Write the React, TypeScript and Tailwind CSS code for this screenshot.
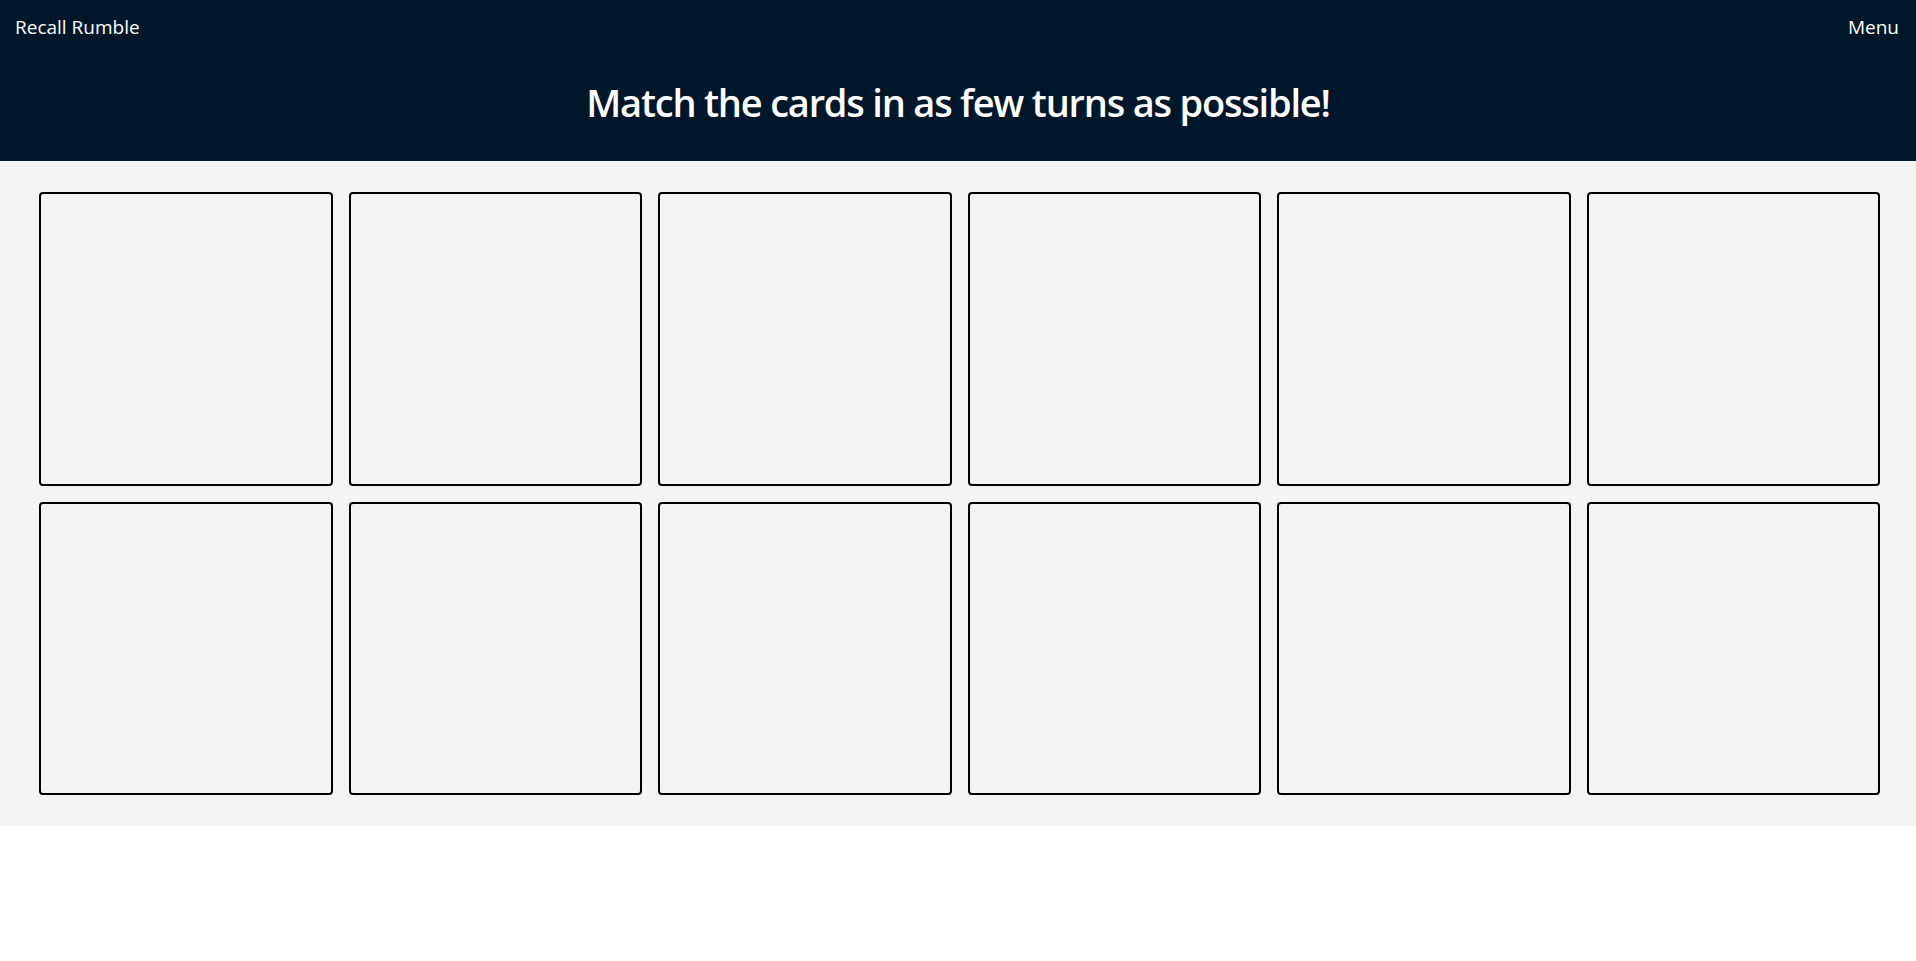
import React from "react";

export default function App() {
  const cards = Array.from({ length: 12 }, (_, i) => i);
  return (
    <div className="min-h-[961px] bg-white" style={{ fontFamily: '"Open Sans", "Noto Sans", sans-serif' }}>
      <header className="h-[161px] bg-[#00162a] text-white flex flex-col">
        <nav className="flex justify-between items-center pl-[15px] pr-[17px] h-[54px] text-[19px]">
          <span>Recall Rumble</span>
          <span>Menu</span>
        </nav>
        <h1 className="text-center text-[38px] font-semibold tracking-[-1.2px] mt-[22px] leading-[52px]">
          Match the cards in as few turns as possible!
        </h1>
      </header>
      <main className="bg-[#f4f4f4] pl-[39px] pr-[36px] py-[31px]">
        <div className="grid grid-cols-6 gap-[16px]">
          {cards.map((i) => (
            <div key={i} className="aspect-square border-2 border-black rounded-[4px] bg-[#f4f4f4]" />
          ))}
        </div>
      </main>
    </div>
  );
}
